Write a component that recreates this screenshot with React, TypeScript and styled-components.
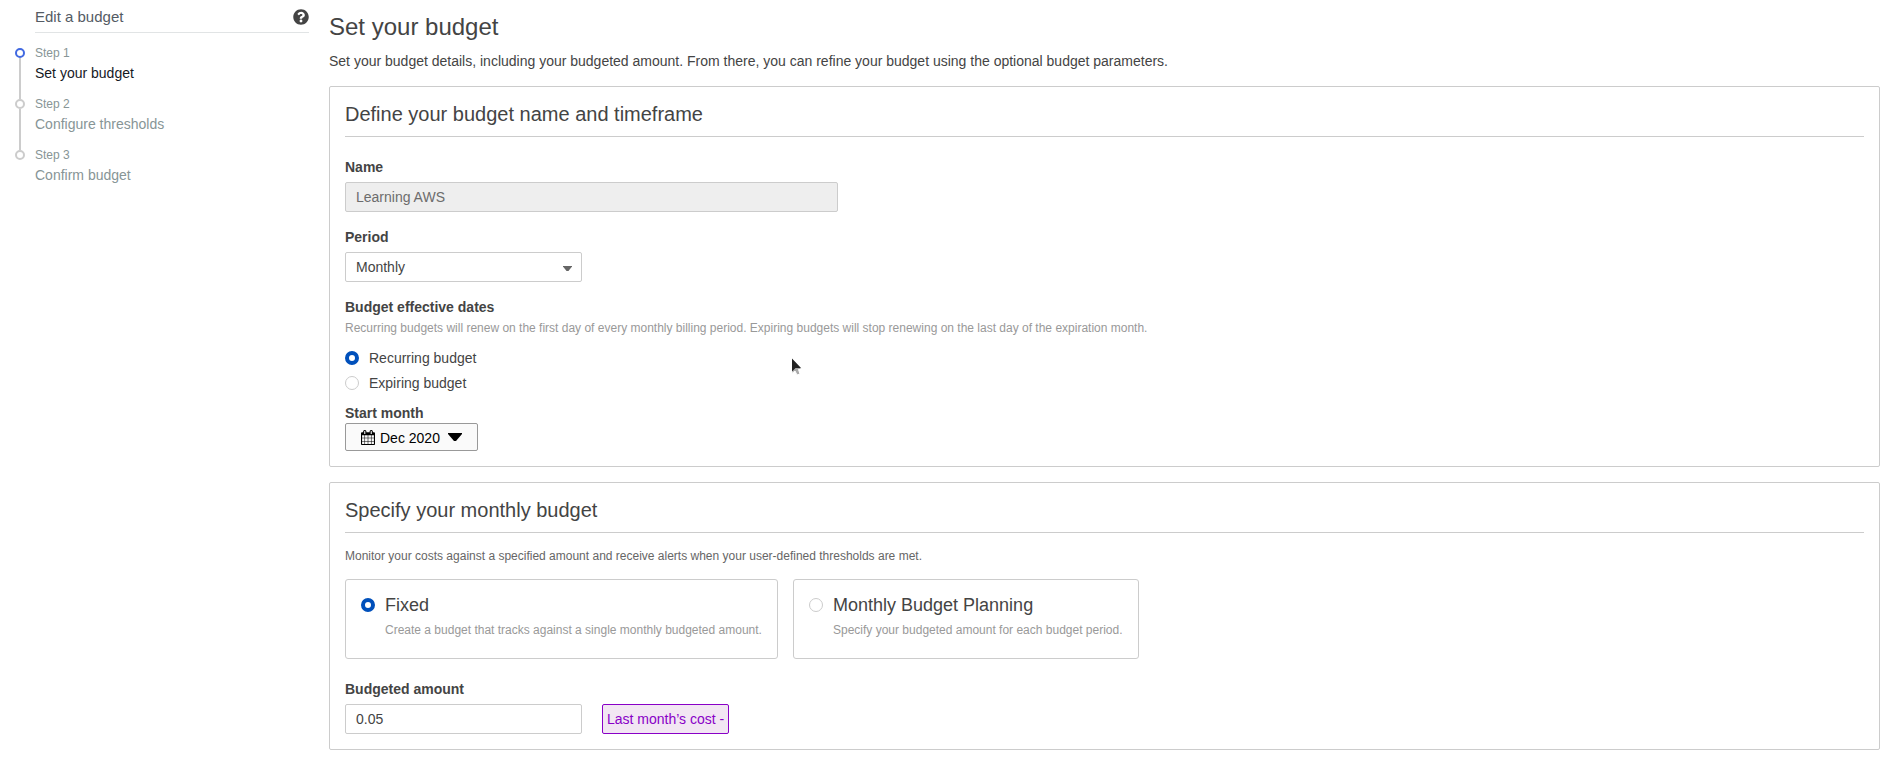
import React from "react";
import styled, { createGlobalStyle } from "styled-components";
import { FaQuestionCircle } from "react-icons/fa";

const GlobalStyle = createGlobalStyle`
  *, *::before, *::after { box-sizing: border-box; }
  body {
    margin: 0;
    background: #fff;
    color: #444;
    font-family: "Liberation Sans", Arial, sans-serif;
    font-size: 14px;
    line-height: 20px;
  }
  h1, h2, h3, p, ol { margin: 0; padding: 0; font-weight: normal; }
`;

const Page = styled.div`
  display: flex;
  align-items: flex-start;
  gap: 20px;
  width: 100%;
  height: 758px;
  padding-right: 5px;
  overflow: hidden;
`;

const Sidebar = styled.nav`
  flex: 0 0 309px;
  padding-left: 15px;
`;

const SidebarHeader = styled.div`
  display: flex;
  align-items: center;
  justify-content: space-between;
  height: 33px;
  margin-left: 20px;
  padding-top: 2px;
  border-bottom: 1px solid #e1e4e5;
  color: #545b64;
  font-size: 15px;
  svg { color: #444; }
`;

const StepList = styled.ol`
  list-style: none;
  margin-top: 10px;
`;

const Step = styled.li`
  display: flex;
  gap: 10px;
  height: 51px;
`;

const Track = styled.div`
  display: flex;
  flex-direction: column;
  align-items: center;
  width: 10px;
  padding-top: 5px;
`;

const Dot = styled.span<{ $active?: boolean }>`
  flex: none;
  width: 10px;
  height: 10px;
  border: 2px solid ${(p) => (p.$active ? "#4169e1" : "#ccc")};
  border-radius: 50%;
`;

const Connector = styled.span`
  flex: none;
  width: 2px;
  height: 41px;
  background: #ccc;
`;

const StepText = styled.div`
  display: flex;
  flex-direction: column;
`;

const StepNumber = styled.span`
  color: #879596;
  font-size: 12px;
  line-height: 20px;
`;

const StepName = styled.span<{ $active?: boolean }>`
  color: ${(p) => (p.$active ? "#16191f" : "#879596")};
  line-height: 20px;
`;

const Main = styled.main`
  flex: 1;
  min-width: 0;
`;

const Title = styled.h1`
  padding-top: 10px;
  font-size: 24px;
  line-height: 33px;
`;

const Intro = styled.p`
  margin-top: 8px;
  line-height: 20px;
`;

const Card = styled.section<{ $height: number }>`
  height: ${(p) => p.$height}px;
  margin-top: 15px;
  padding: 0 15px;
  border: 1px solid #ccc;
  border-radius: 2px;
`;

const CardTitle = styled.h2`
  height: 50px;
  padding-top: 13px;
  border-bottom: 1px solid #ccc;
  font-size: 20px;
  line-height: 28px;
`;

const Label = styled.h3<{ $top: number }>`
  margin-top: ${(p) => p.$top}px;
  font-size: 14px;
  font-weight: bold;
  line-height: 20px;
`;

const Hint = styled.p<{ $dark?: boolean; $top?: number }>`
  padding-top: ${(p) => p.$top ?? 0}px;
  color: ${(p) => (p.$dark ? "#666" : "#999")};
  font-size: 12px;
  line-height: 20px;
`;

const FieldRow = styled.div`
  display: flex;
  gap: 20px;
  margin-top: 5px;
`;

const Field = styled.div<{ $width: number; $disabled?: boolean }>`
  display: flex;
  align-items: center;
  justify-content: space-between;
  width: ${(p) => p.$width}px;
  height: 30px;
  padding: 0 10px;
  border: 1px solid #ccc;
  border-radius: 2px;
  background: ${(p) => (p.$disabled ? "#eee" : "#fff")};
  color: ${(p) => (p.$disabled ? "#6c6c6c" : "#444")};
`;

const SelectArrow = styled.svg`
  margin: 3px -1px 0 0;
`;

const RadioGroup = styled.div`
  display: flex;
  flex-direction: column;
  gap: 5px;
  margin-top: 10px;
`;

const RadioRow = styled.div`
  display: flex;
  align-items: center;
  gap: 10px;
  height: 20px;
`;

const Radio = styled.span<{ $checked?: boolean }>`
  flex: none;
  width: 14px;
  height: 14px;
  border: ${(p) => (p.$checked ? "4px solid #0050bb" : "1px solid #ccc")};
  border-radius: 50%;
  background: #fff;
`;

const MonthButton = styled.button`
  display: flex;
  align-items: flex-start;
  width: 133px;
  height: 28px;
  margin: 0;
  padding: 4px 0 0 15px;
  border: 1px solid #999;
  border-radius: 2px;
  background: #fafafa;
  color: #000;
  font: 14px/20px "Liberation Sans", Arial, sans-serif;
`;

const MonthText = styled.span`
  margin: 0 8px 0 5px;
  white-space: nowrap;
`;

const CalendarSvg = styled.svg`
  flex: none;
  margin-top: 2px;
`;

const MonthArrow = styled.svg`
  flex: none;
  margin-top: 5px;
`;

const Options = styled.div`
  display: flex;
  gap: 15px;
  margin-top: 13px;
`;

const Option = styled.div<{ $width: number }>`
  display: flex;
  gap: 10px;
  width: ${(p) => p.$width}px;
  height: 80px;
  padding: 18px 15px 0;
  border: 1px solid #ccc;
  border-radius: 3px;
  white-space: nowrap;
`;

const OptionTitle = styled.h3`
  margin: -4px 0 4px;
  font-size: 18px;
  line-height: 22px;
`;

const CostBadge = styled.div`
  height: 30px;
  width: 127px;
  padding: 0 4px;
  border: 1px solid #8900c7;
  border-radius: 2px;
  background: #f2e6f3;
  color: #8900c7;
  line-height: 28px;
  white-space: nowrap;
`;

const Pointer = styled.svg`
  position: absolute;
  left: 790px;
  top: 357px;
`;

const steps = ["Set your budget", "Configure thresholds", "Confirm budget"];

function CalendarIcon() {
  return (
    <CalendarSvg width="14" height="15" viewBox="64 0 1664 1792" preserveAspectRatio="none">
      <path d="M192 1664h288v-288h-288v288zm352 0h320v-288h-320v288zm-352-352h288v-320h-288v320zm352 0h320v-320h-320v320zm-352-384h288v-288h-288v288zm736 736h320v-288h-320v288zm-384-736h320v-288h-320v288zm768 736h288v-288h-288v288zm-384-352h320v-320h-320v320zm-352-864v-288q0-13-9.5-22.5t-22.5-9.5h-64q-13 0-22.5 9.5t-9.5 22.5v288q0 13 9.5 22.5t22.5 9.5h64q13 0 22.5-9.5t9.5-22.5zm736 864h288v-320h-288v320zm-384-384h320v-288h-320v288zm384 0h288v-288h-288v288zm32-480v-288q0-13-9.5-22.5t-22.5-9.5h-64q-13 0-22.5 9.5t-9.5 22.5v288q0 13 9.5 22.5t22.5 9.5h64q13 0 22.5-9.5t9.5-22.5zm384-64v1280q0 52-38 90t-90 38h-1408q-52 0-90-38t-38-90v-1280q0-52 38-90t90-38h128v-96q0-66 47-113t113-47h64q66 0 113 47t47 113v96h384v-96q0-66 47-113t113-47h64q66 0 113 47t47 113v96h128q52 0 90 38t38 90z" />
    </CalendarSvg>
  );
}

export default function App() {
  return (
    <>
      <GlobalStyle />
      <Page>
        <Sidebar>
          <SidebarHeader>
            Edit a budget
            <FaQuestionCircle size={16} />
          </SidebarHeader>
          <StepList>
            {steps.map((name, i) => (
              <Step key={name}>
                <Track>
                  <Dot $active={i === 0} />
                  {i < steps.length - 1 && <Connector />}
                </Track>
                <StepText>
                  <StepNumber>Step {i + 1}</StepNumber>
                  <StepName $active={i === 0}>{name}</StepName>
                </StepText>
              </Step>
            ))}
          </StepList>
        </Sidebar>
        <Main>
          <Title>Set your budget</Title>
          <Intro>
            Set your budget details, including your budgeted amount. From there, you can refine your
            budget using the optional budget parameters.
          </Intro>
          <Card $height={381}>
            <CardTitle>Define your budget name and timeframe</CardTitle>
            <Label $top={20}>Name</Label>
            <FieldRow>
              <Field $width={493} $disabled>Learning AWS</Field>
            </FieldRow>
            <Label $top={15}>Period</Label>
            <FieldRow>
              <Field $width={237}>
                Monthly
                <SelectArrow width="9" height="5" viewBox="0 0 9 5">
                  <path d="M0 0h9v.5L5.500 5h-2L0 .5z" fill="#666" />
                </SelectArrow>
              </Field>
            </FieldRow>
            <Label $top={15}>Budget effective dates</Label>
            <Hint $top={1}>
              Recurring budgets will renew on the first day of every monthly billing period. Expiring
              budgets will stop renewing on the last day of the expiration month.
            </Hint>
            <RadioGroup>
              <RadioRow><Radio $checked />Recurring budget</RadioRow>
              <RadioRow><Radio />Expiring budget</RadioRow>
            </RadioGroup>
            <Label $top={10}>Start month</Label>
            <MonthButton>
              <CalendarIcon />
              <MonthText>Dec 2020</MonthText>
              <MonthArrow width="14" height="8" viewBox="0 0 14 8">
                <path d="M0 0h14v1L8 8H6L0 1z" />
              </MonthArrow>
            </MonthButton>
          </Card>
          <Card $height={268}>
            <CardTitle>Specify your monthly budget</CardTitle>
            <Hint $dark $top={13}>
              Monitor your costs against a specified amount and receive alerts when your user-defined
              thresholds are met.
            </Hint>
            <Options>
              <Option $width={433}>
                <Radio $checked />
                <div>
                  <OptionTitle>Fixed</OptionTitle>
                  <Hint>Create a budget that tracks against a single monthly budgeted amount.</Hint>
                </div>
              </Option>
              <Option $width={346}>
                <Radio />
                <div>
                  <OptionTitle>Monthly Budget Planning</OptionTitle>
                  <Hint>Specify your budgeted amount for each budget period.</Hint>
                </div>
              </Option>
            </Options>
            <Label $top={20}>Budgeted amount</Label>
            <FieldRow>
              <Field $width={237}>0.05</Field>
              <CostBadge>Last month’s cost -</CostBadge>
            </FieldRow>
          </Card>
        </Main>
        <Pointer width="14" height="20" viewBox="0 0 14 20">
          <path d="M2 2v14.500l3-2.500 2 4 3-1-1.500-4.500H12z" fill="#aaa" stroke="#fff" />
          <path d="M2 1.500v13l3.500-3.500H11z" fill="#222" />
        </Pointer>
      </Page>
    </>
  );
}
